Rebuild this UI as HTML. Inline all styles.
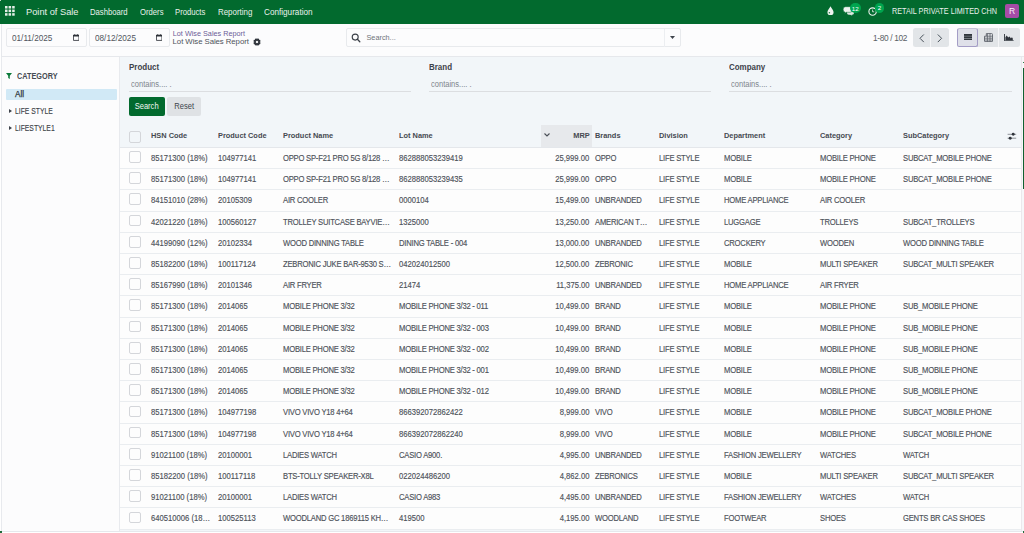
<!DOCTYPE html>
<html>
<head>
<meta charset="utf-8">
<style>
*{box-sizing:border-box;margin:0;padding:0}
html,body{width:1024px;height:533px;overflow:hidden;background:#fff;font-family:"Liberation Sans",sans-serif;color:#4b5058}
.abs{position:absolute}
#nav{position:absolute;left:0;top:0;width:1024px;height:24px;background:#026a2e}
#nav .t{position:absolute;top:0;height:24px;line-height:24px;color:#eaf1ec;font-size:8.6px;white-space:nowrap;transform:scaleX(0.895);transform-origin:0 50%}
#cp{position:absolute;left:1px;top:24px;width:1023px;height:33px;background:#fcfcfd;border-bottom:1px solid #e6e8ec;border-left:1px solid #e6e8ec}
.inp{position:absolute;top:28px;height:18.6px;border:1px solid #e8eaed;border-radius:2px;background:#fcfcfd}
#side{position:absolute;left:1px;top:57px;width:119px;height:475px;background:#fcfcfd;border-right:1px solid #e8eaee;border-left:1px solid #e8eaee}
#main{position:absolute;left:120px;top:57px;width:901px;height:475px;background:#f2f6f9}
.row{position:absolute;left:120px;width:901px;height:21.21px;background:#fdfdfd;border-bottom:1px solid #eaedf0}
.c{position:absolute;top:0;line-height:21px;font-size:8.6px;white-space:nowrap;color:#4d525a;-webkit-text-stroke:0.15px #4d525a;transform:scaleX(0.89);transform-origin:0 50%}
.r{text-align:right;transform-origin:100% 50%}
.cb{position:absolute;top:3.1px;width:11.7px;height:11.7px;border:1px solid #d4d6da;border-radius:2px;background:#fdfdfd}
.h{position:absolute;top:125px;line-height:22px;font-size:8px;font-weight:bold;color:#464a51;white-space:nowrap;transform:scaleX(0.925);transform-origin:0 50%}
</style>
</head>
<body>
<div id="nav">
  <svg class="abs" style="left:5.2px;top:5.9px" width="9.7" height="9.7" viewBox="0 0 10 10" fill="#e4efe8">
    <rect x="0" y="0" width="2.6" height="2.6"/><rect x="3.7" y="0" width="2.6" height="2.6"/><rect x="7.4" y="0" width="2.6" height="2.6"/>
    <rect x="0" y="3.7" width="2.6" height="2.6"/><rect x="3.7" y="3.7" width="2.6" height="2.6"/><rect x="7.4" y="3.7" width="2.6" height="2.6"/>
    <rect x="0" y="7.4" width="2.6" height="2.6"/><rect x="3.7" y="7.4" width="2.6" height="2.6"/><rect x="7.4" y="7.4" width="2.6" height="2.6"/>
  </svg>
  <span class="t" style="left:25.6px;font-size:9.5px;line-height:23px;transform:scaleX(0.975)">Point of Sale</span>
  <span class="t" style="left:90px">Dashboard</span>
  <span class="t" style="left:139.5px">Orders</span>
  <span class="t" style="left:175px">Products</span>
  <span class="t" style="left:217.5px;transform:scaleX(0.92)">Reporting</span>
  <span class="t" style="left:264px;transform:scaleX(0.95)">Configuration</span>
  <!-- right icons -->
  <svg class="abs" style="left:827px;top:5.5px" width="7" height="9.5" viewBox="0 0 7 9.5"><path d="M3.5 0.3C4.4 2.4 6.6 4.3 6.6 6.2A3.1 3.1 0 0 1 0.4 6.2C0.4 4.3 2.6 2.4 3.5 0.3Z" fill="#eef3ef"/><circle cx="2.4" cy="6.7" r="0.75" fill="#2c7a46"/></svg>
  <svg class="abs" style="left:842.5px;top:6px" width="11" height="9.5" viewBox="0 0 11 9.5"><path d="M4 4.5h5.2a1.8 1.8 0 0 1 1.8 1.8v0.6a1.8 1.8 0 0 1-1.8 1.8h-0.6l0.8 1-2.2-1H5.8A1.8 1.8 0 0 1 4 6.9Z" fill="#dfe9e2"/><path d="M2.6 0.7h4.4a2.4 2.4 0 0 1 2.4 2.4v0.8a2.4 2.4 0 0 1-2.4 2.4H3.4L1.6 7.4l0.5-1.2A2.4 2.4 0 0 1 0.2 3.9V3.1A2.4 2.4 0 0 1 2.6 0.7Z" fill="#eef3ef" stroke="#026a2e" stroke-width="0.5"/></svg>
  <div class="abs" style="left:849.8px;top:3px;width:10.8px;height:9.9px;border-radius:5.4px;background:#00a54f;color:#ffffff;font-size:6.2px;line-height:11.2px;text-align:center">12</div>
  <svg class="abs" style="left:868px;top:6.5px" width="10" height="9" viewBox="0 0 10 9"><circle cx="4.6" cy="4.6" r="3.7" fill="none" stroke="#f0f4f1" stroke-width="1.1"/><path d="M4.6 2.6v2.2h1.6" fill="none" stroke="#f0f4f1" stroke-width="0.8"/></svg>
  <div class="abs" style="left:874.7px;top:3px;width:9.6px;height:9.6px;border-radius:4.8px;background:#00a54f;color:#ffffff;font-size:6.2px;line-height:10.8px;text-align:center">2</div>
  <span class="t" style="left:892px;font-size:8.3px;line-height:22.8px;transform:scaleX(0.875)">RETAIL PRIVATE LIMITED CHN</span>
  <div class="abs" style="left:1005px;top:4px;width:14px;height:14px;border-radius:2px;background:#a64ca6;color:#fbeefb;font-size:8.5px;line-height:14px;text-align:center">R</div>
</div>

<div id="cp"></div>
<div class="inp" style="left:6px;width:80.5px"></div>
<span class="abs" style="left:12.1px;top:28.8px;line-height:18.5px;font-size:9.1px;color:#50555c;transform:scaleX(0.9);transform-origin:0 50%">01/11/2025</span>
<svg class="abs" style="left:72.5px;top:34px" width="6.4" height="6.9" viewBox="0 0 7 7.5"><path d="M0.5 1.3h6v5.7h-6Z" fill="none" stroke="#2d3138" stroke-width="0.9"/><rect x="0.1" y="1" width="6.8" height="1.7" fill="#2d3138"/><rect x="1.5" y="0.2" width="0.8" height="1" fill="#2d3138"/><rect x="4.7" y="0.2" width="0.8" height="1" fill="#2d3138"/></svg>
<div class="inp" style="left:89px;width:81px"></div>
<span class="abs" style="left:95.3px;top:28.8px;line-height:18.5px;font-size:9.1px;color:#50555c;transform:scaleX(0.9);transform-origin:0 50%">08/12/2025</span>
<svg class="abs" style="left:155.5px;top:34px" width="6.4" height="6.9" viewBox="0 0 7 7.5"><path d="M0.5 1.3h6v5.7h-6Z" fill="none" stroke="#2d3138" stroke-width="0.9"/><rect x="0.1" y="1" width="6.8" height="1.7" fill="#2d3138"/><rect x="1.5" y="0.2" width="0.8" height="1" fill="#2d3138"/><rect x="4.7" y="0.2" width="0.8" height="1" fill="#2d3138"/></svg>

<span class="abs" style="left:172.8px;top:28.8px;font-size:7.25px;line-height:9px;color:#6c5d98">Lot Wise Sales Report</span>
<span class="abs" style="left:172.6px;top:37.2px;letter-spacing:-0.065px;font-size:7.8px;line-height:10px;color:#4e535b">Lot Wise Sales Report</span>
<svg class="abs" style="left:253.3px;top:37.6px" width="8" height="8" viewBox="0 0 8 8"><path fill="#2f343b" fill-rule="evenodd" d="M6.60 3.93 L7.64 4.64 L7.03 6.13 L5.79 5.89 L5.89 5.79 L6.13 7.03 L4.64 7.64 L3.93 6.60 L4.07 6.60 L3.36 7.64 L1.87 7.03 L2.11 5.79 L2.21 5.89 L0.97 6.13 L0.36 4.64 L1.40 3.93 L1.40 4.07 L0.36 3.36 L0.97 1.87 L2.21 2.11 L2.11 2.21 L1.87 0.97 L3.36 0.36 L4.07 1.40 L3.93 1.40 L4.64 0.36 L6.13 0.97 L5.89 2.21 L5.79 2.11 L7.03 1.87 L7.64 3.36 L6.60 4.07Z M4 2.8a1.2 1.2 0 1 0 0.01 0Z"/></svg>

<!-- search -->
<div class="inp" style="left:346px;width:334.5px"></div>
<div class="abs" style="left:663.5px;top:29px;width:1px;height:17.5px;background:#eceef1"></div>
<svg class="abs" style="left:351px;top:33px" width="10" height="10" viewBox="0 0 10 10"><circle cx="4.2" cy="4.1" r="3" fill="none" stroke="#3a3f47" stroke-width="1.1"/><path d="M6.4 6.3L8.8 8.7" stroke="#3a3f47" stroke-width="1.3" stroke-linecap="round"/></svg>
<span class="abs" style="left:366.5px;top:28.5px;line-height:18.5px;font-size:7.3px;color:#6f747b">Search...</span>
<svg class="abs" style="left:669.6px;top:36px" width="5" height="3" viewBox="0 0 5 3"><path d="M0 0h5L2.5 2.9Z" fill="#3f444c"/></svg>

<!-- pager -->
<span class="abs" style="left:873px;top:28.5px;line-height:18.5px;font-size:8.3px;letter-spacing:-0.33px;color:#5a5f66">1-80 / 102</span>
<div class="abs" style="left:912.5px;top:28.3px;width:36.4px;height:18.5px;background:#e2e5e8;border-radius:2.5px"></div>
<div class="abs" style="left:930.3px;top:28.3px;width:0.9px;height:18.5px;background:#f4f5f7"></div>
<svg class="abs" style="left:918.5px;top:33.5px" width="6" height="9" viewBox="0 0 6 9"><path d="M4.8 0.5L1 4.3 4.8 8.1" fill="none" stroke="#475059" stroke-width="1"/></svg>
<svg class="abs" style="left:936.7px;top:33.5px" width="6" height="9" viewBox="0 0 6 9"><path d="M0.8 0.5L4.6 4.3 0.8 8.1" fill="none" stroke="#475059" stroke-width="1"/></svg>
<div class="abs" style="left:957.2px;top:28.3px;width:62.8px;height:18.5px;background:#e2e5e8;border-radius:2.5px"></div>
<div class="abs" style="left:957.2px;top:28.3px;width:20.8px;height:18.5px;background:#dfe0e9;border:0.8px solid #a49dc6;border-top-color:#c4c2d6;border-radius:2.5px"></div>
<div class="abs" style="left:998.2px;top:28.3px;width:0.9px;height:18.5px;background:#f4f5f7"></div>
<svg class="abs" style="left:963.7px;top:33.7px" width="8" height="6.4" viewBox="0 0 8 6.4"><rect x="0" y="0" width="8" height="1.9" fill="#30353c"/><rect x="0" y="2.25" width="8" height="1.9" fill="#30353c"/><rect x="0" y="4.5" width="8" height="1.9" fill="#30353c"/></svg>
<svg class="abs" style="left:983.8px;top:32.8px" width="9" height="9" viewBox="0 0 9 9"><path d="M2.3 0.6h5.4a0.8 0.8 0 0 1 0.8 0.8v6.8a0.4 0.4 0 0 1-0.4 0.4H1a0.5 0.5 0 0 1-0.5-0.5V3.2h1.8Z" fill="#e2e5e8" stroke="#5d636b" stroke-width="0.9"/><path d="M0.5 5.2h8 M0.5 7h8 M2.3 3.2h6.2 M3.4 0.6v8.2 M6 0.6v8.2" fill="none" stroke="#5d636b" stroke-width="0.8"/></svg>
<svg class="abs" style="left:1004.3px;top:33.6px" width="10" height="7.4" viewBox="0 0 10 7.4"><path d="M0.5 0v6.9H9.8" fill="none" stroke="#2f343b" stroke-width="0.9"/><path d="M1.4 6.5V3.3l1.3-1.9 1.5 2.2 1.3-1 1.3 1.6 1.2-1 0.8 1.3v2Z" fill="#2f343b"/></svg>

<!-- sidebar -->
<div id="side"></div>
<svg class="abs" style="left:6.3px;top:73px" width="6" height="6" viewBox="0 0 6 6"><path d="M0 0h6L3.8 2.8V6L2.2 5V2.8Z" fill="#0b7a3a"/></svg>
<span class="abs" style="left:16.6px;top:71px;font-size:8.7px;line-height:10px;font-weight:bold;color:#454a52;transform:scaleX(0.84);transform-origin:0 50%">CATEGORY</span>
<div class="abs" style="left:6px;top:89px;width:111px;height:11.4px;background:#d1e9f6;border-radius:1px"></div>
<span class="abs" style="left:15px;top:89.2px;font-size:8.2px;line-height:11px;color:#30353c;-webkit-text-stroke:0.25px #30353c">All</span>
<svg class="abs" style="left:8.8px;top:109.3px" width="3.2" height="4" viewBox="0 0 3 3.6"><path d="M0 0L3 1.8 0 3.6Z" fill="#3d424a"/></svg>
<span class="abs" style="left:15.4px;top:106.4px;font-size:8.5px;line-height:10px;color:#3a3f46;-webkit-text-stroke:0.12px #3a3f46;transform:scaleX(0.8);transform-origin:0 50%">LIFE STYLE</span>
<svg class="abs" style="left:8.8px;top:126px" width="3.2" height="4" viewBox="0 0 3 3.6"><path d="M0 0L3 1.8 0 3.6Z" fill="#3d424a"/></svg>
<span class="abs" style="left:15.4px;top:123.2px;font-size:8.5px;line-height:10px;color:#3a3f46;-webkit-text-stroke:0.12px #3a3f46;transform:scaleX(0.8);transform-origin:0 50%">LIFESTYLE1</span>

<!-- main -->
<div id="main"></div>
<span class="abs" style="left:129px;top:62.3px;font-size:8.8px;line-height:10px;font-weight:bold;color:#3d424a;transform:scaleX(0.905);transform-origin:0 50%">Product</span>
<span class="abs" style="left:131px;top:78.6px;font-size:8.4px;line-height:10px;color:#80858c;transform:scaleX(0.9);transform-origin:0 50%">contains.... .</span>
<div class="abs" style="left:129px;top:91px;width:282px;height:1px;background:#dcdee1"></div>
<span class="abs" style="left:429px;top:62.3px;font-size:8.8px;line-height:10px;font-weight:bold;color:#3d424a;transform:scaleX(0.905);transform-origin:0 50%">Brand</span>
<span class="abs" style="left:431px;top:78.6px;font-size:8.4px;line-height:10px;color:#80858c;transform:scaleX(0.9);transform-origin:0 50%">contains.... .</span>
<div class="abs" style="left:429px;top:91px;width:282px;height:1px;background:#dcdee1"></div>
<span class="abs" style="left:729px;top:62.3px;font-size:8.8px;line-height:10px;font-weight:bold;color:#3d424a;transform:scaleX(0.905);transform-origin:0 50%">Company</span>
<span class="abs" style="left:731px;top:78.6px;font-size:8.4px;line-height:10px;color:#80858c;transform:scaleX(0.9);transform-origin:0 50%">contains.... .</span>
<div class="abs" style="left:729px;top:91px;width:282.5px;height:1px;background:#dcdee1"></div>

<div class="abs" style="left:129px;top:97.2px;width:36px;height:18.5px;background:#026a2e;border-radius:2px;color:#f2f7f3;font-size:8.6px;line-height:18.5px;text-align:center"><span style="display:inline-block;transform:scaleX(0.88)">Search</span></div>
<div class="abs" style="left:167.4px;top:97.2px;width:33.3px;height:18.5px;background:#dfe2e5;border-radius:2px;color:#3d424a;font-size:8.6px;line-height:18.5px;text-align:center"><span style="display:inline-block;transform:scaleX(0.88)">Reset</span></div>

<!-- table header -->
<div class="abs" style="left:120px;top:147px;width:901px;height:1px;background:#e4e7eb"></div>
<span class="cb" style="left:129px;top:131px;background:transparent"></span>
<div class="abs" style="left:541px;top:125px;width:51px;height:22px;background:#e7e9ec"></div>
<svg class="abs" style="left:543.8px;top:132.5px" width="6" height="4" viewBox="0 0 6 4"><path d="M0.5 0.5L3 3 5.5 0.5" fill="none" stroke="#4a4f57" stroke-width="1.1"/></svg>
<span class="h" style="right:434.5px;transform-origin:100% 50%">MRP</span>
<span class="h" style="left:151.2px">HSN Code</span><span class="h" style="left:218.3px">Product Code</span><span class="h" style="left:283.4px">Product Name</span><span class="h" style="left:398.8px">Lot Name</span><span class="h" style="left:595.3px">Brands</span><span class="h" style="left:659.4px">Division</span><span class="h" style="left:723.8px">Department</span><span class="h" style="left:819.5px">Category</span><span class="h" style="left:903.2px">SubCategory</span>
<svg class="abs" style="left:1006.5px;top:132px" width="10" height="8" viewBox="0 0 10 8"><path d="M0.6 2.3h8.6M0.6 6.2h8.6" stroke="#6a6f76" stroke-width="0.75"/><circle cx="6.2" cy="2.3" r="1.45" fill="#2f343b"/><circle cx="3.2" cy="6.2" r="1.45" fill="#2f343b"/></svg>

<div class="row" style="top:147.90px"><span class="cb" style="left:9px"></span><span class="c" style="left:31.2px;">85171300 (18%)</span><span class="c" style="left:98.3px;">104977141</span><span class="c" style="left:163.4px; letter-spacing:-0.25px;">OPPO SP-F21 PRO 5G 8/128 …</span><span class="c" style="left:278.8px;">862888053239419</span><span class="c r" style="right:431.5px">25,999.00</span><span class="c" style="left:475.3px; letter-spacing:-0.25px;">OPPO</span><span class="c" style="left:539.4px; letter-spacing:-0.25px;">LIFE STYLE</span><span class="c" style="left:603.8px; letter-spacing:-0.25px;">MOBILE</span><span class="c" style="left:699.5px; letter-spacing:-0.25px;">MOBILE PHONE</span><span class="c" style="left:783.2px; letter-spacing:-0.25px;">SUBCAT_MOBILE PHONE</span></div>
<div class="row" style="top:169.11px"><span class="cb" style="left:9px"></span><span class="c" style="left:31.2px;">85171300 (18%)</span><span class="c" style="left:98.3px;">104977141</span><span class="c" style="left:163.4px; letter-spacing:-0.25px;">OPPO SP-F21 PRO 5G 8/128 …</span><span class="c" style="left:278.8px;">862888053239435</span><span class="c r" style="right:431.5px">25,999.00</span><span class="c" style="left:475.3px; letter-spacing:-0.25px;">OPPO</span><span class="c" style="left:539.4px; letter-spacing:-0.25px;">LIFE STYLE</span><span class="c" style="left:603.8px; letter-spacing:-0.25px;">MOBILE</span><span class="c" style="left:699.5px; letter-spacing:-0.25px;">MOBILE PHONE</span><span class="c" style="left:783.2px; letter-spacing:-0.25px;">SUBCAT_MOBILE PHONE</span></div>
<div class="row" style="top:190.32px"><span class="cb" style="left:9px"></span><span class="c" style="left:31.2px;">84151010 (28%)</span><span class="c" style="left:98.3px;">20105309</span><span class="c" style="left:163.4px; letter-spacing:-0.25px;">AIR COOLER</span><span class="c" style="left:278.8px;">0000104</span><span class="c r" style="right:431.5px">15,499.00</span><span class="c" style="left:475.3px; letter-spacing:-0.25px;">UNBRANDED</span><span class="c" style="left:539.4px; letter-spacing:-0.25px;">LIFE STYLE</span><span class="c" style="left:603.8px; letter-spacing:-0.25px;">HOME APPLIANCE</span><span class="c" style="left:699.5px; letter-spacing:-0.25px;">AIR COOLER</span><span class="c" style="left:783.2px;"></span></div>
<div class="row" style="top:211.53px"><span class="cb" style="left:9px"></span><span class="c" style="left:31.2px;">42021220 (18%)</span><span class="c" style="left:98.3px;">100560127</span><span class="c" style="left:163.4px; letter-spacing:-0.25px;">TROLLEY SUITCASE BAYVIE…</span><span class="c" style="left:278.8px;">1325000</span><span class="c r" style="right:431.5px">13,250.00</span><span class="c" style="left:475.3px; letter-spacing:-0.25px;">AMERICAN T…</span><span class="c" style="left:539.4px; letter-spacing:-0.25px;">LIFE STYLE</span><span class="c" style="left:603.8px; letter-spacing:-0.25px;">LUGGAGE</span><span class="c" style="left:699.5px; letter-spacing:-0.25px;">TROLLEYS</span><span class="c" style="left:783.2px; letter-spacing:-0.25px;">SUBCAT_TROLLEYS</span></div>
<div class="row" style="top:232.74px"><span class="cb" style="left:9px"></span><span class="c" style="left:31.2px;">44199090 (12%)</span><span class="c" style="left:98.3px;">20102334</span><span class="c" style="left:163.4px; letter-spacing:-0.25px;">WOOD DINNING TABLE</span><span class="c" style="left:278.8px; letter-spacing:-0.25px;">DINING TABLE - 004</span><span class="c r" style="right:431.5px">13,000.00</span><span class="c" style="left:475.3px; letter-spacing:-0.25px;">UNBRANDED</span><span class="c" style="left:539.4px; letter-spacing:-0.25px;">LIFE STYLE</span><span class="c" style="left:603.8px; letter-spacing:-0.25px;">CROCKERY</span><span class="c" style="left:699.5px; letter-spacing:-0.25px;">WOODEN</span><span class="c" style="left:783.2px; letter-spacing:-0.25px;">WOOD DINNING TABLE</span></div>
<div class="row" style="top:253.95px"><span class="cb" style="left:9px"></span><span class="c" style="left:31.2px;">85182200 (18%)</span><span class="c" style="left:98.3px;">100117124</span><span class="c" style="left:163.4px; letter-spacing:-0.25px;">ZEBRONIC JUKE BAR-9530 S…</span><span class="c" style="left:278.8px;">042024012500</span><span class="c r" style="right:431.5px">12,500.00</span><span class="c" style="left:475.3px; letter-spacing:-0.25px;">ZEBRONIC</span><span class="c" style="left:539.4px; letter-spacing:-0.25px;">LIFE STYLE</span><span class="c" style="left:603.8px; letter-spacing:-0.25px;">MOBILE</span><span class="c" style="left:699.5px; letter-spacing:-0.25px;">MULTI SPEAKER</span><span class="c" style="left:783.2px; letter-spacing:-0.25px;">SUBCAT_MULTI SPEAKER</span></div>
<div class="row" style="top:275.16px"><span class="cb" style="left:9px"></span><span class="c" style="left:31.2px;">85167990 (18%)</span><span class="c" style="left:98.3px;">20101346</span><span class="c" style="left:163.4px; letter-spacing:-0.25px;">AIR FRYER</span><span class="c" style="left:278.8px;">21474</span><span class="c r" style="right:431.5px">11,375.00</span><span class="c" style="left:475.3px; letter-spacing:-0.25px;">UNBRANDED</span><span class="c" style="left:539.4px; letter-spacing:-0.25px;">LIFE STYLE</span><span class="c" style="left:603.8px; letter-spacing:-0.25px;">HOME APPLIANCE</span><span class="c" style="left:699.5px; letter-spacing:-0.25px;">AIR FRYER</span><span class="c" style="left:783.2px;"></span></div>
<div class="row" style="top:296.37px"><span class="cb" style="left:9px"></span><span class="c" style="left:31.2px;">85171300 (18%)</span><span class="c" style="left:98.3px;">2014065</span><span class="c" style="left:163.4px; letter-spacing:-0.25px;">MOBILE PHONE 3/32</span><span class="c" style="left:278.8px; letter-spacing:-0.25px;">MOBILE PHONE 3/32 - 011</span><span class="c r" style="right:431.5px">10,499.00</span><span class="c" style="left:475.3px; letter-spacing:-0.25px;">BRAND</span><span class="c" style="left:539.4px; letter-spacing:-0.25px;">LIFE STYLE</span><span class="c" style="left:603.8px; letter-spacing:-0.25px;">MOBILE</span><span class="c" style="left:699.5px; letter-spacing:-0.25px;">MOBILE PHONE</span><span class="c" style="left:783.2px; letter-spacing:-0.25px;">SUB_MOBILE PHONE</span></div>
<div class="row" style="top:317.58px"><span class="cb" style="left:9px"></span><span class="c" style="left:31.2px;">85171300 (18%)</span><span class="c" style="left:98.3px;">2014065</span><span class="c" style="left:163.4px; letter-spacing:-0.25px;">MOBILE PHONE 3/32</span><span class="c" style="left:278.8px; letter-spacing:-0.25px;">MOBILE PHONE 3/32 - 003</span><span class="c r" style="right:431.5px">10,499.00</span><span class="c" style="left:475.3px; letter-spacing:-0.25px;">BRAND</span><span class="c" style="left:539.4px; letter-spacing:-0.25px;">LIFE STYLE</span><span class="c" style="left:603.8px; letter-spacing:-0.25px;">MOBILE</span><span class="c" style="left:699.5px; letter-spacing:-0.25px;">MOBILE PHONE</span><span class="c" style="left:783.2px; letter-spacing:-0.25px;">SUB_MOBILE PHONE</span></div>
<div class="row" style="top:338.79px"><span class="cb" style="left:9px"></span><span class="c" style="left:31.2px;">85171300 (18%)</span><span class="c" style="left:98.3px;">2014065</span><span class="c" style="left:163.4px; letter-spacing:-0.25px;">MOBILE PHONE 3/32</span><span class="c" style="left:278.8px; letter-spacing:-0.25px;">MOBILE PHONE 3/32 - 002</span><span class="c r" style="right:431.5px">10,499.00</span><span class="c" style="left:475.3px; letter-spacing:-0.25px;">BRAND</span><span class="c" style="left:539.4px; letter-spacing:-0.25px;">LIFE STYLE</span><span class="c" style="left:603.8px; letter-spacing:-0.25px;">MOBILE</span><span class="c" style="left:699.5px; letter-spacing:-0.25px;">MOBILE PHONE</span><span class="c" style="left:783.2px; letter-spacing:-0.25px;">SUB_MOBILE PHONE</span></div>
<div class="row" style="top:360.00px"><span class="cb" style="left:9px"></span><span class="c" style="left:31.2px;">85171300 (18%)</span><span class="c" style="left:98.3px;">2014065</span><span class="c" style="left:163.4px; letter-spacing:-0.25px;">MOBILE PHONE 3/32</span><span class="c" style="left:278.8px; letter-spacing:-0.25px;">MOBILE PHONE 3/32 - 001</span><span class="c r" style="right:431.5px">10,499.00</span><span class="c" style="left:475.3px; letter-spacing:-0.25px;">BRAND</span><span class="c" style="left:539.4px; letter-spacing:-0.25px;">LIFE STYLE</span><span class="c" style="left:603.8px; letter-spacing:-0.25px;">MOBILE</span><span class="c" style="left:699.5px; letter-spacing:-0.25px;">MOBILE PHONE</span><span class="c" style="left:783.2px; letter-spacing:-0.25px;">SUB_MOBILE PHONE</span></div>
<div class="row" style="top:381.21px"><span class="cb" style="left:9px"></span><span class="c" style="left:31.2px;">85171300 (18%)</span><span class="c" style="left:98.3px;">2014065</span><span class="c" style="left:163.4px; letter-spacing:-0.25px;">MOBILE PHONE 3/32</span><span class="c" style="left:278.8px; letter-spacing:-0.25px;">MOBILE PHONE 3/32 - 012</span><span class="c r" style="right:431.5px">10,499.00</span><span class="c" style="left:475.3px; letter-spacing:-0.25px;">BRAND</span><span class="c" style="left:539.4px; letter-spacing:-0.25px;">LIFE STYLE</span><span class="c" style="left:603.8px; letter-spacing:-0.25px;">MOBILE</span><span class="c" style="left:699.5px; letter-spacing:-0.25px;">MOBILE PHONE</span><span class="c" style="left:783.2px; letter-spacing:-0.25px;">SUB_MOBILE PHONE</span></div>
<div class="row" style="top:402.42px"><span class="cb" style="left:9px"></span><span class="c" style="left:31.2px;">85171300 (18%)</span><span class="c" style="left:98.3px;">104977198</span><span class="c" style="left:163.4px; letter-spacing:-0.25px;">VIVO VIVO Y18 4+64</span><span class="c" style="left:278.8px;">866392072862422</span><span class="c r" style="right:431.5px">8,999.00</span><span class="c" style="left:475.3px; letter-spacing:-0.25px;">VIVO</span><span class="c" style="left:539.4px; letter-spacing:-0.25px;">LIFE STYLE</span><span class="c" style="left:603.8px; letter-spacing:-0.25px;">MOBILE</span><span class="c" style="left:699.5px; letter-spacing:-0.25px;">MOBILE PHONE</span><span class="c" style="left:783.2px; letter-spacing:-0.25px;">SUBCAT_MOBILE PHONE</span></div>
<div class="row" style="top:423.63px"><span class="cb" style="left:9px"></span><span class="c" style="left:31.2px;">85171300 (18%)</span><span class="c" style="left:98.3px;">104977198</span><span class="c" style="left:163.4px; letter-spacing:-0.25px;">VIVO VIVO Y18 4+64</span><span class="c" style="left:278.8px;">866392072862240</span><span class="c r" style="right:431.5px">8,999.00</span><span class="c" style="left:475.3px; letter-spacing:-0.25px;">VIVO</span><span class="c" style="left:539.4px; letter-spacing:-0.25px;">LIFE STYLE</span><span class="c" style="left:603.8px; letter-spacing:-0.25px;">MOBILE</span><span class="c" style="left:699.5px; letter-spacing:-0.25px;">MOBILE PHONE</span><span class="c" style="left:783.2px; letter-spacing:-0.25px;">SUBCAT_MOBILE PHONE</span></div>
<div class="row" style="top:444.84px"><span class="cb" style="left:9px"></span><span class="c" style="left:31.2px;">91021100 (18%)</span><span class="c" style="left:98.3px;">20100001</span><span class="c" style="left:163.4px; letter-spacing:-0.25px;">LADIES WATCH</span><span class="c" style="left:278.8px; letter-spacing:-0.25px;">CASIO A900.</span><span class="c r" style="right:431.5px">4,995.00</span><span class="c" style="left:475.3px; letter-spacing:-0.25px;">UNBRANDED</span><span class="c" style="left:539.4px; letter-spacing:-0.25px;">LIFE STYLE</span><span class="c" style="left:603.8px; letter-spacing:-0.25px;">FASHION JEWELLERY</span><span class="c" style="left:699.5px; letter-spacing:-0.25px;">WATCHES</span><span class="c" style="left:783.2px; letter-spacing:-0.25px;">WATCH</span></div>
<div class="row" style="top:466.05px"><span class="cb" style="left:9px"></span><span class="c" style="left:31.2px;">85182200 (18%)</span><span class="c" style="left:98.3px;">100117118</span><span class="c" style="left:163.4px; letter-spacing:-0.25px;">BTS-TOLLY SPEAKER-X8L</span><span class="c" style="left:278.8px;">022024486200</span><span class="c r" style="right:431.5px">4,862.00</span><span class="c" style="left:475.3px; letter-spacing:-0.25px;">ZEBRONICS</span><span class="c" style="left:539.4px; letter-spacing:-0.25px;">LIFE STYLE</span><span class="c" style="left:603.8px; letter-spacing:-0.25px;">MOBILE</span><span class="c" style="left:699.5px; letter-spacing:-0.25px;">MULTI SPEAKER</span><span class="c" style="left:783.2px; letter-spacing:-0.25px;">SUBCAT_MULTI SPEAKER</span></div>
<div class="row" style="top:487.26px"><span class="cb" style="left:9px"></span><span class="c" style="left:31.2px;">91021100 (18%)</span><span class="c" style="left:98.3px;">20100001</span><span class="c" style="left:163.4px; letter-spacing:-0.25px;">LADIES WATCH</span><span class="c" style="left:278.8px; letter-spacing:-0.25px;">CASIO A983</span><span class="c r" style="right:431.5px">4,495.00</span><span class="c" style="left:475.3px; letter-spacing:-0.25px;">UNBRANDED</span><span class="c" style="left:539.4px; letter-spacing:-0.25px;">LIFE STYLE</span><span class="c" style="left:603.8px; letter-spacing:-0.25px;">FASHION JEWELLERY</span><span class="c" style="left:699.5px; letter-spacing:-0.25px;">WATCHES</span><span class="c" style="left:783.2px; letter-spacing:-0.25px;">WATCH</span></div>
<div class="row" style="top:508.47px"><span class="cb" style="left:9px"></span><span class="c" style="left:31.2px;">640510006 (18…</span><span class="c" style="left:98.3px;">100525113</span><span class="c" style="left:163.4px; letter-spacing:-0.25px;">WOODLAND GC 1869115 KH…</span><span class="c" style="left:278.8px;">419500</span><span class="c r" style="right:431.5px">4,195.00</span><span class="c" style="left:475.3px; letter-spacing:-0.25px;">WOODLAND</span><span class="c" style="left:539.4px; letter-spacing:-0.25px;">LIFE STYLE</span><span class="c" style="left:603.8px; letter-spacing:-0.25px;">FOOTWEAR</span><span class="c" style="left:699.5px; letter-spacing:-0.25px;">SHOES</span><span class="c" style="left:783.2px; letter-spacing:-0.25px;">GENTS BR CAS SHOES</span></div>

<!-- scrollbar & frame -->
<div class="abs" style="left:1021px;top:57px;width:3px;height:475px;background:#f6f7f9;border-left:1px solid #ebe8ec"></div>
<div class="abs" style="left:1022.5px;top:62px;width:1.5px;height:1px;background:#2f7a4a"></div>
<div class="abs" style="left:1022.5px;top:67.6px;width:1.5px;height:121px;background:#11602f"></div>
<div class="abs" style="left:0;top:531px;width:1024px;height:1px;background:#e6e8ec"></div>
<div class="abs" style="left:0;top:0;width:1px;height:1px;background:#c9dacd"></div>
<div class="abs" style="left:0;top:531px;width:1.5px;height:2px;background:#1f6b3a"></div>
<div class="abs" style="left:1022.5px;top:531px;width:1.5px;height:2px;background:#1f6b3a"></div>
</body>
</html>
